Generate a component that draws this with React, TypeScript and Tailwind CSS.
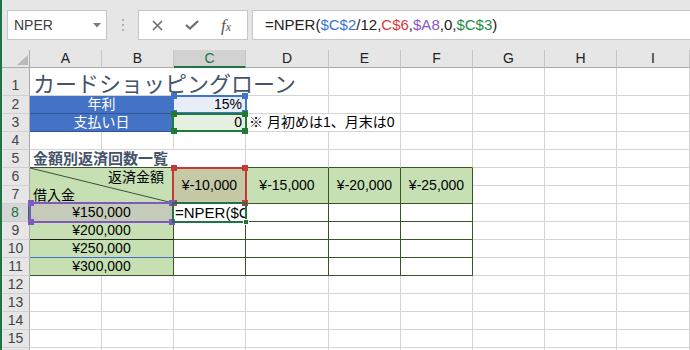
import React from "react";

const GRID = "border-r border-b border-[#d4d4d4]";
const DARK = "border-r border-b border-[#375623]";
const CELL = "flex items-center whitespace-nowrap px-[3px] text-[14px] leading-[17px] text-black";
const COLS = ["A", "B", "C", "D", "E", "F", "G", "H", "I"];

function RowHead({ n, active, tall }: { n: number; active?: boolean; tall?: boolean }) {
  const base = "flex justify-center text-[14px] leading-[17px] " + (tall ? "items-end pb-[1px] " : "items-center ");
  if (active) {
    return (
      <div className={base + "border-b border-b-[#c8c8c8] border-r-2 border-r-[#217346] bg-[#d6d6d6] text-[#217346]"}>
        {n}
      </div>
    );
  }
  return (
    <div className={base + "border-b border-b-[#d0d0d0] border-r border-r-[#ababab] bg-[#e6e6e6] text-[#444]"}>
      {n}
    </div>
  );
}

function Blanks({ n }: { n: number }) {
  return (
    <>
      {Array.from({ length: n }).map((_, i) => (
        <div key={i} className={GRID} />
      ))}
    </>
  );
}

function RefBox({ pos, border, fill }: { pos: string; border: string; fill: string }) {
  return (
    <div className={"pointer-events-none absolute z-10 " + pos}>
      <div className={"absolute inset-0 border-2 " + border} />
      <span className={"absolute -left-[1px] -top-[2px] h-[6px] w-[6px] " + fill} />
      <span className={"absolute -right-[1px] -top-[2px] h-[6px] w-[6px] " + fill} />
      <span className={"absolute -bottom-[2px] -left-[1px] h-[6px] w-[6px] " + fill} />
      <span className={"absolute -bottom-[2px] -right-[1px] h-[6px] w-[6px] " + fill} />
    </div>
  );
}

const amounts = ["¥150,000", "¥200,000", "¥250,000", "¥300,000"];

export default function App() {
  return (
    <div className="h-[350px] w-[690px] overflow-hidden border-l-2 border-[#217346] bg-white font-['Liberation_Sans','Noto_Sans_CJK_JP',sans-serif]">
      {/* formula bar */}
      <div className="flex h-[50px] items-start bg-[#e6e6e6] pt-[10px]">
        <div className="ml-[5px] flex h-[30px] w-[100px] items-center justify-between border border-[#c6c6c6] bg-white pl-[6px] pr-[5px]">
          <span className="text-[14px] text-[#404040]">NPER</span>
          <svg width="8" height="5" viewBox="0 0 8 5">
            <polygon points="0,0 8,0 4,4.5" fill="#7a7a7a" />
          </svg>
        </div>
        <div className="flex h-[30px] w-[31px] flex-col items-center justify-center gap-[3px]">
          <span className="h-[2px] w-[2px] bg-[#b0b0b0]" />
          <span className="h-[2px] w-[2px] bg-[#b0b0b0]" />
          <span className="h-[2px] w-[2px] bg-[#b0b0b0]" />
        </div>
        <div className="flex h-[30px] w-[110px] items-center gap-[22px] border border-[#c6c6c6] bg-white pl-[13px]">
          <svg width="11" height="11" viewBox="0 0 11 11">
            <path d="M1 1 L10 10 M10 1 L1 10" stroke="#6e6e6e" strokeWidth="1.6" />
          </svg>
          <svg width="14" height="10" viewBox="0 0 14 10">
            <path d="M1 5 L5 8.5 L13 1" stroke="#6e6e6e" strokeWidth="2.2" fill="none" />
          </svg>
          <span className="font-['Liberation_Serif',serif] text-[17px] italic leading-none text-[#555]">
            f<span className="text-[12px]">x</span>
          </span>
        </div>
        <div className="ml-[4px] flex h-[30px] flex-1 items-center border border-r-0 border-[#c6c6c6] bg-white pl-[12px] text-[15px] text-[#222]">
          <span>=NPER(</span>
          <span className="text-[#3b73d1]">$C$2</span>
          <span>/12,</span>
          <span className="text-[#d83a3a]">C$6</span>
          <span>,</span>
          <span className="text-[#8e55c9]">$A8</span>
          <span>,0,</span>
          <span className="text-[#1f8a45]">$C$3</span>
          <span>)</span>
        </div>
      </div>

      {/* sheet */}
      <div className="grid grid-cols-[28px_72px_72px_72px_83px_72px_72px_72px_72px_73px] grid-rows-[18px_28px_repeat(16,18px)]">
        {/* column headers */}
        <div className="flex items-end justify-end border-b border-r border-[#ababab] bg-[#e6e6e6] pb-[2px] pr-[1px]">
          <svg width="11" height="10" viewBox="0 0 11 10">
            <polygon points="11,0 11,10 0,10" fill="#b9b9b9" />
          </svg>
        </div>
        {COLS.map((c) =>
          c === "C" ? (
            <div key={c} className="flex items-center justify-center border-b-2 border-r border-b-[#217346] border-r-[#c6c6c6] bg-[#d2d2d2] text-[14px] text-[#217346]">
              {c}
            </div>
          ) : (
            <div key={c} className="flex items-center justify-center border-b border-r border-b-[#ababab] border-r-[#c6c6c6] bg-[#e6e6e6] text-[14px] text-[#222]">
              {c}
            </div>
          )
        )}

        {/* row 1 */}
        <RowHead n={1} tall />
        <div className={"col-span-4 flex items-end whitespace-nowrap px-[3px] font-['Noto_Sans_CJK_JP',sans-serif] text-[22px] leading-[25px] text-[#44546a] " + GRID}>
          カードショッピングローン
        </div>
        <Blanks n={5} />

        {/* row 2 */}
        <RowHead n={2} />
        <div className={"col-span-2 justify-center border-r border-b border-[#2f5597] bg-[#4472c4] text-white " + CELL}>年利</div>
        <div className={"relative justify-end bg-[#e8eef9] " + CELL + " " + GRID}>
          15%
          <RefBox pos="-left-[2px] -top-[1px] -right-[2px] -bottom-[1px]" border="border-[#3f74cf]" fill="bg-[#3f74cf]" />
        </div>
        <Blanks n={6} />

        {/* row 3 */}
        <RowHead n={3} />
        <div className={"col-span-2 justify-center border-r border-b border-[#2f5597] bg-[#4472c4] text-white " + CELL}>支払い日</div>
        <div className={"relative justify-end bg-[#e5f0e2] " + CELL + " " + GRID}>
          0
          <RefBox pos="-left-[2px] -top-[1px] -right-[2px] -bottom-[1px]" border="border-[#1e7b34]" fill="bg-[#1e7b34]" />
        </div>
        <div className={"col-span-2 " + CELL + " " + GRID}>※ 月初めは1、月末は0</div>
        <Blanks n={4} />

        {/* row 4 */}
        <RowHead n={4} />
        <Blanks n={9} />

        {/* row 5 */}
        <RowHead n={5} />
        <div className="col-span-3 flex items-center whitespace-nowrap border-r border-b border-r-[#d4d4d4] border-b-[#375623] px-[3px] text-[15px] font-bold leading-[17px] text-[#44546a]">
          金額別返済回数一覧
        </div>
        <div className="border-r border-b border-r-[#d4d4d4] border-b-[#375623]" />
        <div className="border-r border-b border-r-[#d4d4d4] border-b-[#375623]" />
        <div className="border-r border-b border-r-[#d4d4d4] border-b-[#375623]" />
        <Blanks n={3} />

        {/* rows 6-7 */}
        <RowHead n={6} />
        <div className={"relative col-span-2 row-span-2 flex flex-col justify-between bg-[#c6e0b4] text-[14px] leading-[18px] " + DARK}>
          <svg className="absolute inset-0 h-full w-full" viewBox="0 0 100 100" preserveAspectRatio="none">
            <line x1="0" y1="0" x2="100" y2="100" stroke="#3f4f35" strokeWidth="1" vectorEffect="non-scaling-stroke" />
          </svg>
          <span className="self-end pr-[9px]">返済金額</span>
          <span className="self-start pl-[3px]">借入金</span>
        </div>
        <div className={"relative row-span-2 justify-center bg-[#c5c9a6] text-[#ff0000] " + CELL + " " + DARK}>
          ¥-10,000
          <RefBox pos="-left-[2px] -top-[1px] -right-[2px] -bottom-[1px]" border="border-[#c5383a]" fill="bg-[#c5383a]" />
        </div>
        <div className={"row-span-2 justify-center bg-[#c6e0b4] text-[#ff0000] " + CELL + " " + DARK}>¥-15,000</div>
        <div className={"row-span-2 justify-center bg-[#c6e0b4] text-[#ff0000] " + CELL + " " + DARK}>¥-20,000</div>
        <div className={"row-span-2 justify-center bg-[#c6e0b4] text-[#ff0000] " + CELL + " " + DARK}>¥-25,000</div>
        <Blanks n={3} />
        <RowHead n={7} />
        <Blanks n={3} />

        {/* row 8 */}
        <RowHead n={8} active />
        <div className={"relative col-span-2 justify-center bg-[#c4cbb8] " + CELL + " " + DARK}>
          {amounts[0]}
          <RefBox pos="-left-[1px] -top-[2px] -right-[1px] -bottom-[2px]" border="border-[#8059c0]" fill="bg-[#8059c0]" />
        </div>
        <div className={"relative bg-white " + DARK}>
          <div className="h-full w-full overflow-hidden whitespace-nowrap pl-[1px] text-[15px] leading-[17px]">=NPER($C$</div>
          <div className="pointer-events-none absolute -left-[2px] -top-[2px] -right-[2px] -bottom-[2px] z-20 border-2 border-[#217346]">
            <span className="absolute -bottom-[4px] -right-[4px] h-[6px] w-[6px] border border-white bg-[#217346]" />
          </div>
        </div>
        <div className={DARK} />
        <div className={DARK} />
        <div className={DARK} />
        <Blanks n={3} />

        {/* rows 9-11 */}
        {amounts.slice(1).map((a, i) => (
          <React.Fragment key={a}>
            <RowHead n={9 + i} />
            <div
              className={
                "col-span-2 justify-center bg-[#c6e0b4] " +
                CELL +
                (i === 0
                  ? " border-r border-b border-r-[#375623] border-b-[#222]"
                  : i === 1
                  ? " border-r border-b border-r-[#375623] border-b-[#4472c4]"
                  : " " + DARK)
              }
            >
              {a}
            </div>
            <div className={DARK} />
            <div className={DARK} />
            <div className={DARK} />
            <div className={DARK} />
            <Blanks n={3} />
          </React.Fragment>
        ))}

        {/* rows 12-16 */}
        {[12, 13, 14, 15, 16].map((n) => (
          <React.Fragment key={n}>
            <RowHead n={n} />
            <Blanks n={9} />
          </React.Fragment>
        ))}
      </div>
    </div>
  );
}
